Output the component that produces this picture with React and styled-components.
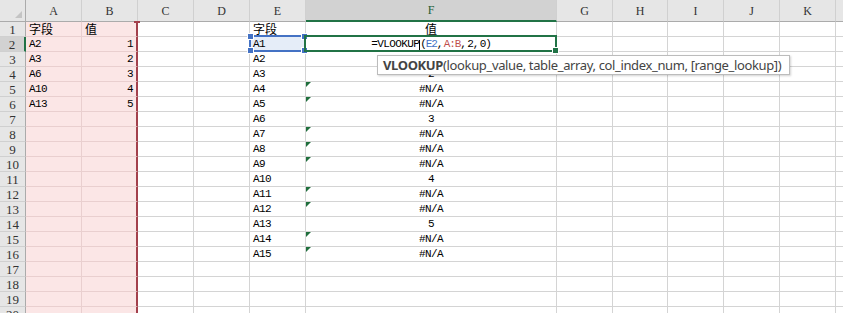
import React from "react";
import styled, { createGlobalStyle, css } from "styled-components";

// Sheet data: source table in A:B, lookup keys in E, VLOOKUP results in F
const columns = [
  { key: "A", width: 56 },
  { key: "B", width: 56 },
  { key: "C", width: 56 },
  { key: "D", width: 56 },
  { key: "E", width: 56 },
  { key: "F", width: 251 },
  { key: "G", width: 56 },
  { key: "H", width: 55 },
  { key: "I", width: 56 },
  { key: "J", width: 56 },
  { key: "K", width: 56 },
  { key: "L", width: 56 },
];

const source = [
  ["A2", 1],
  ["A3", 2],
  ["A6", 3],
  ["A10", 4],
  ["A13", 5],
];
const lookup = Object.fromEntries(source);
const ROWS = 20;

const GREEN = "#217346";
const BLUE = "#4472c4";

const GlobalStyle = createGlobalStyle`
  html, body {
    margin: 0;
    padding: 0;
    background: #ffffff;
    overflow: hidden;
  }
  body {
    font-family: "Liberation Mono", "Noto Sans CJK SC", monospace;
  }
`;

const Sheet = styled.div`
  position: relative;
  display: grid;
  grid-template-columns: 26px ${columns.map((c) => c.width + "px").join(" ")};
  grid-template-rows: 22px;
  grid-auto-rows: 15px;
  width: 843px;
  height: 313px;
  overflow: hidden;
  font-size: 11px;
  letter-spacing: -0.6px;
  color: #000;
`;

const Corner = styled.div`
  position: relative;
  background: #e6e6e6;
  border-right: 1px solid #ababab;
  border-bottom: 1px solid #ababab;
  &::after {
    content: "";
    position: absolute;
    right: 3px;
    bottom: 3px;
    width: 7px;
    height: 7px;
    background: #c4c4c4;
    clip-path: polygon(100% 0, 100% 100%, 0 100%);
  }
`;

const ColHeader = styled.div`
  display: flex;
  align-items: center;
  justify-content: center;
  padding-top: 1px;
  box-sizing: border-box;
  background: ${({ $selected }) => ($selected ? "#d2d2d2" : "#e6e6e6")};
  color: ${({ $selected }) => ($selected ? "#1e5e38" : "#333")};
  border-right: 1px solid #d0d0d0;
  border-bottom: ${({ $selected }) =>
    $selected ? `2px solid ${GREEN}` : "1px solid #ababab"};
  font-family: "Liberation Serif", serif;
  font-size: 12px;
  letter-spacing: 0;
`;

const RowHeader = styled.div`
  display: flex;
  align-items: center;
  justify-content: center;
  box-sizing: border-box;
  background: ${({ $selected }) => ($selected ? "#d2d2d2" : "#e6e6e6")};
  color: #333;
  border-right: ${({ $selected }) =>
    $selected ? `2px solid ${GREEN}` : "1px solid #ababab"};
  border-bottom: 1px solid #d0d0d0;
  font-family: "Liberation Serif", serif;
  font-size: 13px;
  letter-spacing: 0;
  padding-top: 2px;
`;

const fills = {
  pink: css`
    background: #fbe6e6;
    border-right-color: #e9cfcf;
    border-bottom-color: #e9cfcf;
  `,
  blue: css`
    background: #e5edf8;
  `,
};

const Cell = styled.div`
  position: relative;
  display: flex;
  align-items: flex-end;
  justify-content: ${({ $align }) =>
    $align === "right" ? "flex-end" : $align === "center" ? "center" : "flex-start"};
  box-sizing: border-box;
  padding: 0 3px 0 3px;
  line-height: 13px;
  white-space: nowrap;
  border-right: 1px solid #d4d4d4;
  border-bottom: 1px solid #d4d4d4;
  ${({ $fill }) => fills[$fill]}
  ${({ $redEdge }) =>
    $redEdge &&
    css`
      border-right: 2px solid #a3404c;
    `}
`;

const Cjk = styled.span`
  font-family: "Noto Sans CJK SC", sans-serif;
  font-size: 12px;
  letter-spacing: 0;
  line-height: 14px;
`;

const RedCap = styled.span`
  position: absolute;
  top: -1px;
  right: -4px;
  width: 6px;
  height: 2px;
  background: #a3404c;
`;

const ErrorFlag = styled.span`
  position: absolute;
  top: 0;
  left: 0;
  width: 5px;
  height: 5px;
  background: #1f6f3c;
  clip-path: polygon(0 0, 100% 0, 0 100%);
`;

const Frame = styled.span`
  position: absolute;
  top: -2px;
  left: ${({ $left }) => $left}px;
  right: -1px;
  bottom: -1px;
  border: 2px solid ${({ $color }) => $color};
  pointer-events: none;
  z-index: 2;
`;

const Handle = styled.span`
  position: absolute;
  width: 5px;
  height: 5px;
  background: ${({ $color }) => $color};
  border: 1px solid #fff;
  box-sizing: content-box;
  ${({ $v }) => ($v === "top" ? "top: -4px;" : "bottom: -4px;")}
  ${({ $h }) => ($h === "left" ? "left: -4px;" : "right: -4px;")}
`;

const Formula = styled.span`
  margin-left: 0;
`;

const Args = styled.span`
  letter-spacing: -1.1px;
  word-spacing: -4px;
`;

const Ref = styled.span`
  color: ${({ $color }) => $color};
`;

const Caret = styled.span`
  display: inline-block;
  width: 1px;
  height: 12px;
  margin: 0 0 -1px 0;
  background: #000;
  vertical-align: bottom;
`;

const Tooltip = styled.div`
  position: absolute;
  left: 377px;
  top: 55px;
  width: 413px;
  height: 20px;
  box-sizing: border-box;
  padding: 0 5px;
  display: flex;
  align-items: center;
  background: #fff;
  border: 1px solid #bcbcbc;
  box-shadow: 1px 1px 2px rgba(0, 0, 0, 0.18);
  font-family: "Noto Sans", "Open Sans", sans-serif;
  font-size: 13px;
  letter-spacing: -0.36px;
  color: #444;
  white-space: nowrap;
  z-index: 5;
  b {
    font-weight: 700;
  }
`;

function cellFor(col, row) {
  const inSource = col === "A" || col === "B";
  const base = { fill: inSource ? "pink" : undefined, redEdge: col === "B" };

  if (col === "A" || col === "B") {
    if (row === 1)
      return { ...base, content: <Cjk>{col === "A" ? "字段" : "值"}</Cjk>, cap: col === "B" };
    const item = source[row - 2];
    if (!item) return base;
    return col === "A"
      ? { ...base, content: item[0] }
      : { ...base, content: item[1], align: "right" };
  }

  if (col === "E") {
    if (row === 1) return { content: <Cjk>字段</Cjk> };
    if (row === 2) return { content: "A1", fill: "blue", refFrame: true };
    if (row <= 16) return { content: "A" + (row - 1) };
    return {};
  }

  if (col === "F") {
    if (row === 1) return { content: <Cjk>值</Cjk>, align: "center" };
    if (row === 2)
      return {
        align: "center",
        active: true,
        content: (
          <Formula>
            =VLOOKUP<Caret />
            <Args>
              (<Ref $color={BLUE}>E2</Ref>, <Ref $color="#c0504d">A:B</Ref>, 2, 0)
            </Args>
          </Formula>
        ),
      };
    if (row <= 16) {
      const value = lookup["A" + (row - 1)];
      return value === undefined
        ? { content: "#N/A", align: "center", error: true }
        : { content: value, align: "center" };
    }
  }
  return {};
}

export default function App() {
  const rows = Array.from({ length: ROWS }, (_, i) => i + 1);

  return (
    <>
      <GlobalStyle />
      <Sheet>
        <Corner />
        {columns.map((c) => (
          <ColHeader key={c.key} $selected={c.key === "F"}>
            {c.key}
          </ColHeader>
        ))}

        {rows.map((row) => (
          <React.Fragment key={row}>
            <RowHeader $selected={row === 2}>{row}</RowHeader>
            {columns.map((c) => {
              const cell = cellFor(c.key, row);
              return (
                <Cell
                  key={c.key}
                  $align={cell.align}
                  $fill={cell.fill}
                  $redEdge={cell.redEdge}
                >
                  {cell.error && <ErrorFlag />}
                  {cell.cap && <RedCap />}
                  {cell.refFrame && (
                    <Frame $color={BLUE} $left={-1}>
                      <Handle $color={BLUE} $v="top" $h="left" />
                      <Handle $color={BLUE} $v="top" $h="right" />
                      <Handle $color={BLUE} $v="bottom" $h="left" />
                      <Handle $color={BLUE} $v="bottom" $h="right" />
                    </Frame>
                  )}
                  {cell.active && (
                    <Frame $color={GREEN} $left={-2}>
                      <Handle $color={GREEN} $v="bottom" $h="right" />
                    </Frame>
                  )}
                  {cell.content}
                </Cell>
              );
            })}
          </React.Fragment>
        ))}

        <Tooltip>
          <b>VLOOKUP</b>(lookup_value, table_array, col_index_num, [range_lookup])
        </Tooltip>
      </Sheet>
    </>
  );
}
